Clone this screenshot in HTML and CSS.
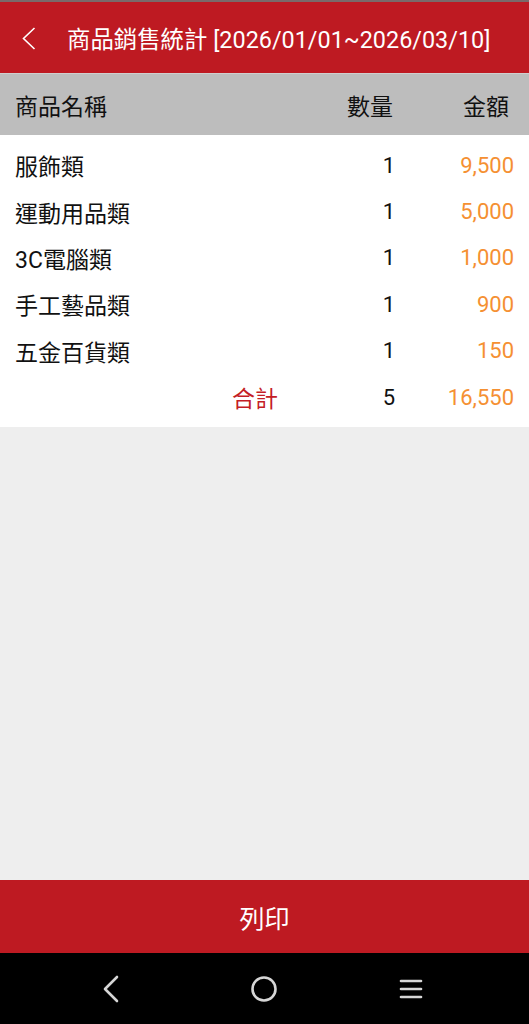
FILE: index.html
```html
<!DOCTYPE html>
<html lang="zh-Hant">
<head>
    <meta charset="utf-8">
    <meta name="viewport" content="width=device-width, initial-scale=1">
    <title>商品銷售統計</title>
    <link rel="stylesheet" href="styles.css">
</head>
<body>
    <div class="screen">
        <div class="status-strip"></div>
        <header class="topbar">
            <span class="back">
                <svg width="14" height="23" viewBox="0 0 14 23"><polyline points="12.5,1 1.5,11.5 12.5,22" fill="none" stroke="#fff" stroke-width="1.6"/></svg>
            </span>
            <h1 class="title">商品銷售統計 [2026/01/01~2026/03/10]</h1>
        </header>

        <div class="table-head">
            <span class="col-name">商品名稱</span>
            <span class="col-qty">數量</span>
            <span class="col-amt">金額</span>
        </div>

        <div class="table-body">
            <div class="row">
                <span class="col-name">服飾類</span>
                <span class="col-qty">1</span>
                <span class="col-amt">9,500</span>
            </div>
            <div class="row">
                <span class="col-name">運動用品類</span>
                <span class="col-qty">1</span>
                <span class="col-amt">5,000</span>
            </div>
            <div class="row">
                <span class="col-name">3C電腦類</span>
                <span class="col-qty">1</span>
                <span class="col-amt">1,000</span>
            </div>
            <div class="row">
                <span class="col-name">手工藝品類</span>
                <span class="col-qty">1</span>
                <span class="col-amt">900</span>
            </div>
            <div class="row">
                <span class="col-name">五金百貨類</span>
                <span class="col-qty">1</span>
                <span class="col-amt">150</span>
            </div>
            <div class="row total">
                <span class="col-name">合計</span>
                <span class="col-qty">5</span>
                <span class="col-amt">16,550</span>
            </div>
        </div>

        <div class="spacer"></div>

        <button class="print-btn" type="button">列印</button>

        <nav class="navbar">
            <svg class="nav-back" width="18" height="28" viewBox="0 0 18 28"><polyline points="15,2 3,14 15,26" fill="none" stroke="#d6d6d6" stroke-width="2.6" stroke-linecap="round" stroke-linejoin="round"/></svg>
            <svg class="nav-home" width="28" height="28" viewBox="0 0 28 28"><circle cx="14" cy="14" r="11.5" fill="none" stroke="#d6d6d6" stroke-width="2.6"/></svg>
            <svg class="nav-menu" width="24" height="22" viewBox="0 0 24 22"><g stroke="#d6d6d6" stroke-width="2.6" stroke-linecap="round"><line x1="2" y1="3" x2="22" y2="3"/><line x1="2" y1="11" x2="22" y2="11"/><line x1="2" y1="19" x2="22" y2="19"/></g></svg>
        </nav>
    </div>
</body>
</html>
```

FILE: styles.css
```css
* {
    box-sizing: border-box;
}

body {
    margin: 0;
    font-family: Roboto, "Noto Sans CJK TC", sans-serif;
    background: #eeeeee;
}

.screen {
    width: 529px;
    height: 1024px;
    display: flex;
    flex-direction: column;
}

.status-strip {
    height: 2px;
    background: #7a6a6a;
}

.topbar {
    height: 71px;
    background: #be1a22;
    display: flex;
    align-items: center;
    padding-left: 22px;
    color: #ffffff;
}

.back {
    display: flex;
    width: 45px;
    margin-top: 2px;
}

.title {
    margin: 0;
    font-size: 23.4px;
    font-weight: normal;
    white-space: nowrap;
}

.table-head {
    height: 62px;
    background: #bdbdbd;
    border-top: 1px solid #cfcfcf;
    display: grid;
    grid-template-columns: 1fr 80px 116px;
    align-items: center;
    padding: 0 20px 0 15px;
    font-size: 23px;
    color: #111111;
}

.table-body {
    background: #ffffff;
    padding: 7px 0;
}

.row {
    height: 46.4px;
    display: grid;
    grid-template-columns: 1fr 80px 119px;
    align-items: center;
    padding: 0 15px;
    font-size: 22px;
    color: #111111;
}

.col-qty,
.col-amt {
    text-align: right;
}

.row .col-amt {
    color: #f59032;
}

.row .col-name {
    font-size: 23px;
}

.total .col-name {
    text-align: right;
    padding-right: 37px;
    color: #c41d25;
}

.spacer {
    flex: 1;
}

.print-btn {
    height: 73px;
    border: none;
    background: #be1a22;
    color: #ffffff;
    font-family: "Noto Sans CJK TC", sans-serif;
    font-size: 25px;
    padding: 0;
}

.navbar {
    height: 71px;
    background: #000000;
    display: flex;
    align-items: center;
    padding-left: 102px;
}

.nav-home {
    margin-left: 130px;
}

.nav-menu {
    margin-left: 121px;
}
```
